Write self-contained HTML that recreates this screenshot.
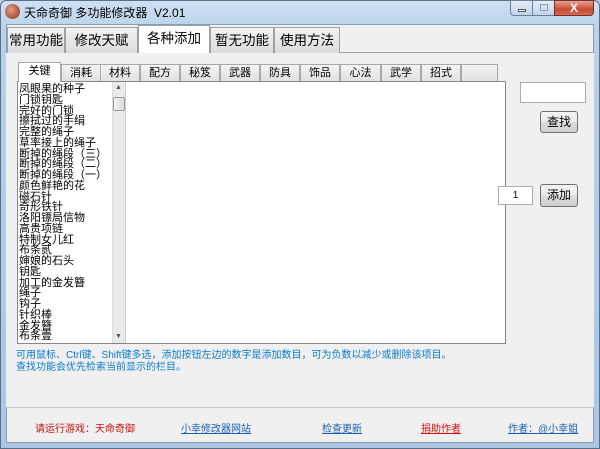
<!DOCTYPE html>
<html><head><meta charset="utf-8"><style>
*{margin:0;padding:0;box-sizing:border-box}
body{width:600px;height:449px;overflow:hidden;background:#bcd3ea;font-family:"Liberation Sans","Noto Sans CJK SC",sans-serif;position:relative}
.a{position:absolute}
.win{left:0;top:0;width:600px;height:449px;background:linear-gradient(#cfe0f1,#b9d1ea 30px,#aac6e3);border:1px solid #5c6f86;border-radius:6px 6px 0 0}
.client{left:6px;top:24px;width:588px;height:419px;background:#f0f0f0;border:1px solid #8a9db3}
.tt{font-size:12px;color:#000;left:24px;top:4px}
.tab{top:27px;height:26px;border:1px solid #a0a0a0;border-bottom:none;background:linear-gradient(#f2f2f2,#dcdcdc);font-size:13.5px;text-align:center;line-height:25px;color:#000;white-space:nowrap;overflow:hidden}
.tab.sel{top:25px;height:28px;background:#fff;z-index:2}
.it{top:64px;height:18px;border:1px solid #a8a8a8;border-bottom:none;background:linear-gradient(#f4f4f4,#e0e0e0);font-size:11px;text-align:center;line-height:17px}
.it.sel{top:62px;height:20px;background:#fff;z-index:2}
.list{left:17px;top:81px;width:489px;height:263px;background:#fff;border:1px solid #828790}
.items{left:19px;top:84px;font-size:11px;line-height:10.75px;color:#000;white-space:nowrap}
.btn{border:1px solid #707070;border-radius:3px;background:linear-gradient(#f2f2f2,#ebebeb 50%,#dddddd 50%,#cfcfcf);font-size:12px;text-align:center}
.inp{background:#fff;border:1px solid #abadb3}
.blue{color:#0a7ad0;font-size:10px;line-height:12px;white-space:nowrap}
.lk{top:420px;font-size:10px;text-decoration:underline;color:#1a5fb4;white-space:nowrap}
</style></head><body>
<div class="a win"></div>
<div class="a" style="left:5px;top:4px;width:15px;height:15px;border-radius:50%;background:radial-gradient(circle at 40% 40%,#e6a080,#8a2a1a)"></div>
<div class="a tt">天命奇御 多功能修改器 &nbsp;V2.01</div>
<div class="a" style="left:510px;top:0;width:23px;height:16px;border:1px solid #6d7f96;border-radius:0 0 0 4px;background:linear-gradient(#e4edf7,#c3d4e8)"><div class="a" style="left:7px;top:8px;width:8px;height:3px;background:#fff;border:1px solid #555"></div></div>
<div class="a" style="left:532px;top:0;width:23px;height:16px;border:1px solid #6d7f96;background:linear-gradient(#e4edf7,#c3d4e8)"><div class="a" style="left:7px;top:3px;width:8px;height:7px;border:1px solid #8899aa"></div></div>
<div class="a" style="left:554px;top:0;width:40px;height:16px;border:1px solid #6d3030;border-radius:0 0 4px 0;background:linear-gradient(#e8a090,#c74a36 60%,#d86a50);color:#fff;font-size:12px;font-weight:bold;text-align:center;line-height:14px">X</div>
<div class="a client"></div>
<div class="a" style="left:6px;top:52px;width:588px;height:355px;border-top:1px solid #a0a0a0;background:#f0f0f0"></div>
<div class="a" style="left:6px;top:407px;width:588px;height:1px;background:#c8c8c8"></div>
<div class="a tab" style="left:7px;width:58px">常用功能</div>
<div class="a tab" style="left:65px;width:73px">修改天赋</div>
<div class="a tab sel" style="left:138px;width:72px">各种添加</div>
<div class="a tab" style="left:210px;width:64px">暂无功能</div>
<div class="a tab" style="left:274px;width:66px">使用方法</div>
<div class="a it sel" style="left:18px;width:43px">关键</div>
<div class="a it" style="left:61px;width:40px">消耗</div>
<div class="a it" style="left:100px;width:40px">材料</div>
<div class="a it" style="left:140px;width:40px">配方</div>
<div class="a it" style="left:180px;width:40px">秘笈</div>
<div class="a it" style="left:220px;width:40px">武器</div>
<div class="a it" style="left:260px;width:40px">防具</div>
<div class="a it" style="left:300px;width:40px">饰品</div>
<div class="a it" style="left:340px;width:41px">心法</div>
<div class="a it" style="left:381px;width:40px">武学</div>
<div class="a it" style="left:421px;width:40px">招式</div>
<div class="a it" style="left:461px;width:37px"></div>
<div class="a list"></div>
<div class="a" style="left:112px;top:82px;width:14px;height:261px;background:#eaeaea;border-left:1px solid #ddd;border-right:1px solid #ccc"></div>
<div class="a" style="left:113px;top:97px;width:12px;height:14px;border:1px solid #999;border-radius:2px;background:linear-gradient(90deg,#f4f4f4,#dcdcdc)"></div>
<div class="a" style="left:115px;top:84px;font-size:7px;color:#555">▲</div>
<div class="a" style="left:115px;top:333px;font-size:7px;color:#555">▼</div>
<div class="a items">凤眼果的种子<br>门锁钥匙<br>完好的门锁<br>擦拭过的手绢<br>完整的绳子<br>草率接上的绳子<br>断掉的绳段（三）<br>断掉的绳段（二）<br>断掉的绳段（一）<br>颜色鲜艳的花<br>磁石针<br>奇形铁针<br>洛阳镖局信物<br>高贵项链<br>特制女儿红<br>布条贰<br>婶娘的石头<br>钥匙<br>加工的金发簪<br>绳子<br>钩子<br>针织棒<br>金发簪<br>布条壹</div>
<div class="a inp" style="left:520px;top:82px;width:66px;height:21px"></div>
<div class="a btn" style="left:540px;top:111px;width:38px;height:22px;line-height:20px">查找</div>
<div class="a inp" style="left:498px;top:186px;width:35px;height:19px;font-size:10px;text-align:center;line-height:17px">1</div>
<div class="a btn" style="left:540px;top:184px;width:38px;height:23px;line-height:21px">添加</div>
<div class="a blue" style="left:16px;top:350px">可用鼠标、Ctrl键、Shift键多选，添加按钮左边的数字是添加数目，可为负数以减少或删除该项目。</div>
<div class="a blue" style="left:16px;top:362px">查找功能会优先检索当前显示的栏目。</div>
<div class="a" style="left:35px;top:420px;font-size:10px;color:#d01010;white-space:nowrap">请运行游戏：天命奇御</div>
<div class="a lk" style="left:181px">小幸修改器网站</div>
<div class="a lk" style="left:322px">检查更新</div>
<div class="a lk" style="left:421px;color:#d01010">捐助作者</div>
<div class="a lk" style="left:508px">作者：@小幸姐</div>
</body></html>
